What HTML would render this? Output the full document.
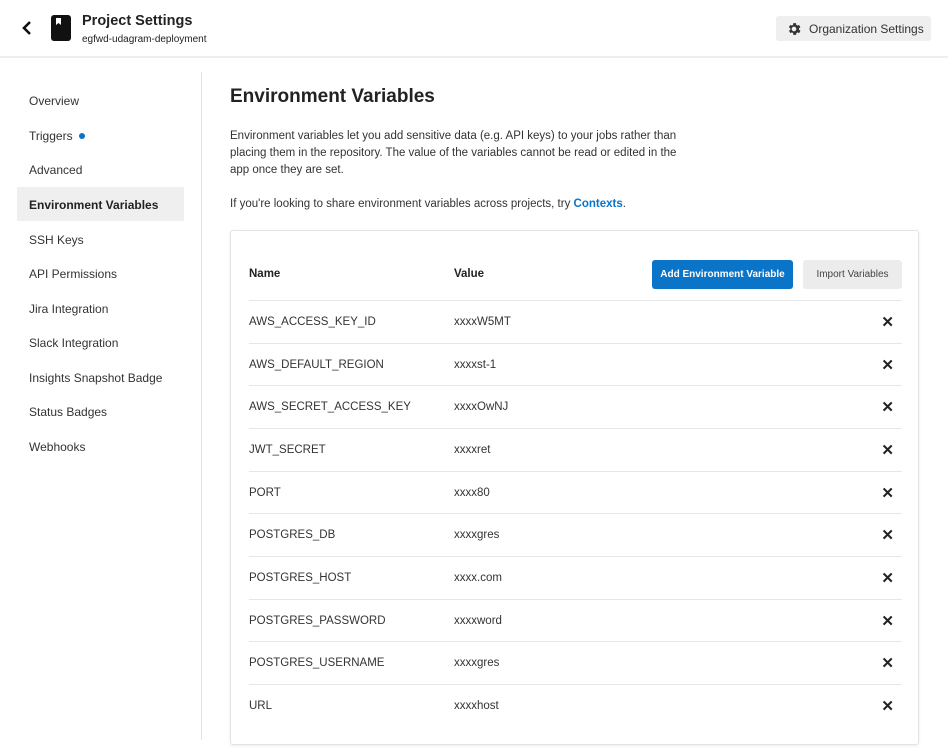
<!DOCTYPE html>
<html><head><style>
*{margin:0;padding:0;box-sizing:border-box}
body{width:948px;height:755px;background:#fff;font-family:"Liberation Sans",sans-serif;color:#333;position:relative;overflow:hidden}
.abs{position:absolute}
.hdr{left:0;top:0;width:948px;height:58px;border-bottom:2px solid #eee}
.nav div{position:absolute;left:17px;width:167px;height:34px;line-height:36px;padding-left:12px;font-size:12px;color:#333}
.card{left:230px;top:230px;width:689px;height:515px;border:1px solid #e3e3e3;border-radius:3px;box-shadow:0 1px 3px rgba(0,0,0,.08)}
.row{position:absolute;left:18px;width:653px;height:43px;border-top:1px solid #e6e6e6;font-size:11.5px;color:#333}
.row span{position:absolute;top:15px}
.x{right:8px;font-size:15px;font-weight:bold;top:12px!important;color:#222}
</style></head><body>
<div class="abs hdr"></div>
<svg class="abs" style="left:21px;top:20px" width="12" height="16" viewBox="0 0 12 16"><path d="M9 2 L3 8 L9 14" stroke="#111" stroke-width="2.6" fill="none"/></svg>
<svg class="abs" style="left:51px;top:15px" width="20" height="26" viewBox="0 0 20 26"><rect x="0" y="0" width="20" height="26" rx="3" fill="#111"/><path d="M5 3 H10 V10 L7.5 8 L5 10 Z" fill="#fff"/></svg>
<div class="abs" style="left:82px;top:13px;font-size:14.5px;font-weight:bold;color:#222">Project Settings</div>
<div class="abs" style="left:82px;top:34px;font-size:10px;color:#222">egfwd-udagram-deployment</div>
<div class="abs" style="left:776px;top:16px;width:155px;height:25px;background:#efefef;border-radius:3px"></div>
<svg class="abs" style="left:786px;top:21px" width="16" height="16" viewBox="0 0 24 24"><path fill="#333" d="M19.4 13a7.5 7.5 0 0 0 0-2l2.1-1.6-2-3.5-2.5 1a7.4 7.4 0 0 0-1.7-1L15 3.2h-4l-.4 2.7a7.4 7.4 0 0 0-1.7 1l-2.5-1-2 3.5L6.6 11a7.5 7.5 0 0 0 0 2l-2.1 1.6 2 3.5 2.5-1a7.4 7.4 0 0 0 1.7 1l.4 2.7h4l.4-2.7a7.4 7.4 0 0 0 1.7-1l2.5 1 2-3.5zM12 15.5a3.5 3.5 0 1 1 0-7 3.5 3.5 0 0 1 0 7z"/></svg>
<div class="abs" style="left:809px;top:22px;font-size:12px;color:#333">Organization Settings</div>
<div class="abs" style="left:201px;top:72px;width:1px;height:668px;background:#e3e3e3"></div>
<div class="nav">
<div style="top:83px">Overview</div>
<div style="top:118px">Triggers <span style="display:inline-block;width:6px;height:6px;border-radius:50%;background:#0a74c8;margin-left:3px;vertical-align:1px"></span></div>
<div style="top:152px">Advanced</div>
<div style="top:187px;background:#efefef;font-weight:bold;color:#222">Environment Variables</div>
<div style="top:222px">SSH Keys</div>
<div style="top:256px">API Permissions</div>
<div style="top:291px">Jira Integration</div>
<div style="top:325px">Slack Integration</div>
<div style="top:360px">Insights Snapshot Badge</div>
<div style="top:394px">Status Badges</div>
<div style="top:429px">Webhooks</div>
</div>
<div class="abs" style="left:230px;top:86px;font-size:19px;font-weight:bold;color:#222">Environment Variables</div>
<div class="abs" style="left:230px;top:128px;width:462px;font-size:11.5px;line-height:17px;color:#333">Environment variables let you add sensitive data (e.g. API keys) to your jobs rather than placing them in the repository. The value of the variables cannot be read or edited in the app once they are set.</div>
<div class="abs" style="left:230px;top:198px;font-size:11.5px;color:#333">If you're looking to share environment variables across projects, try <b style="color:#0a74c8">Contexts</b>.</div>
<div class="abs card">
<div class="abs" style="left:18px;top:37px;font-size:11.5px;font-weight:bold;color:#222">Name</div>
<div class="abs" style="left:223px;top:37px;font-size:11.5px;font-weight:bold;color:#222">Value</div>
<div class="abs" style="left:421px;top:29px;width:141px;height:29px;background:#0a74c8;border-radius:3px;color:#fff;font-size:10px;font-weight:bold;text-align:center;line-height:29px">Add Environment Variable</div>
<div class="abs" style="left:572px;top:29px;width:99px;height:29px;background:#ececec;border-radius:3px;color:#444;font-size:10px;text-align:center;line-height:29px">Import Variables</div>
<div class="row" style="top:69px"><span>AWS_ACCESS_KEY_ID</span><span style="left:205px">xxxxW5MT</span><span class="x">✕</span></div>
<div class="row" style="top:112px"><span>AWS_DEFAULT_REGION</span><span style="left:205px">xxxxst-1</span><span class="x">✕</span></div>
<div class="row" style="top:154px"><span>AWS_SECRET_ACCESS_KEY</span><span style="left:205px">xxxxOwNJ</span><span class="x">✕</span></div>
<div class="row" style="top:197px"><span>JWT_SECRET</span><span style="left:205px">xxxxret</span><span class="x">✕</span></div>
<div class="row" style="top:240px"><span>PORT</span><span style="left:205px">xxxx80</span><span class="x">✕</span></div>
<div class="row" style="top:282px"><span>POSTGRES_DB</span><span style="left:205px">xxxxgres</span><span class="x">✕</span></div>
<div class="row" style="top:325px"><span>POSTGRES_HOST</span><span style="left:205px">xxxx.com</span><span class="x">✕</span></div>
<div class="row" style="top:368px"><span>POSTGRES_PASSWORD</span><span style="left:205px">xxxxword</span><span class="x">✕</span></div>
<div class="row" style="top:410px"><span>POSTGRES_USERNAME</span><span style="left:205px">xxxxgres</span><span class="x">✕</span></div>
<div class="row" style="top:453px"><span>URL</span><span style="left:205px">xxxxhost</span><span class="x">✕</span></div>
</div>
</body></html>
